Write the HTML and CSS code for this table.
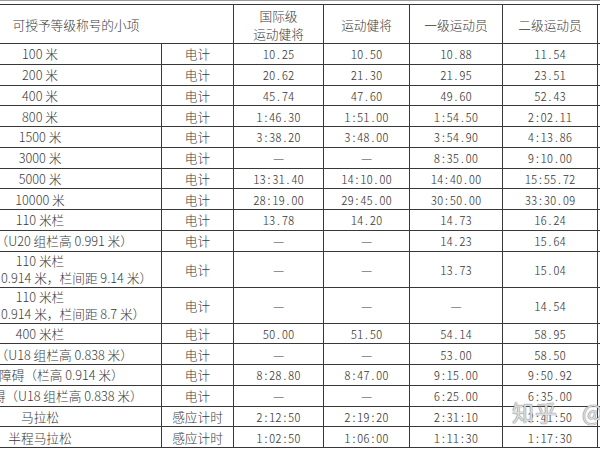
FILE: index.html
```html
<!DOCTYPE html>
<html lang="zh-CN">
<head>
<meta charset="utf-8">
<title>等级标准</title>
<link rel="stylesheet" href="styles.css">
</head>
<body>
<div class="topline"></div>
<table class="grade">
  <colgroup>
    <col class="c-item"><col class="c-time"><col class="c-a"><col class="c-b"><col class="c-c"><col class="c-d"><col class="c-e">
  </colgroup>
  <thead>
    <tr class="head">
      <th colspan="2" class="title">可授予等级称号的小项</th>
      <th class="two">国际级<br>运动健将</th>
      <th>运动健将</th>
      <th>一级运动员</th>
      <th>二级运动员</th>
      <th></th>
    </tr>
  </thead>
  <tbody>
    <tr class="s"><td>100 米</td><td>电计</td><td>10.25</td><td>10.50</td><td>10.88</td><td>11.54</td><td></td></tr>
    <tr class="s"><td>200 米</td><td>电计</td><td>20.62</td><td>21.30</td><td>21.95</td><td>23.51</td><td></td></tr>
    <tr class="s"><td>400 米</td><td>电计</td><td>45.74</td><td>47.60</td><td>49.60</td><td>52.43</td><td></td></tr>
    <tr class="s"><td>800 米</td><td>电计</td><td>1:46.30</td><td>1:51.00</td><td>1:54.50</td><td>2:02.11</td><td></td></tr>
    <tr class="s"><td>1500 米</td><td>电计</td><td>3:38.20</td><td>3:48.00</td><td>3:54.90</td><td>4:13.86</td><td></td></tr>
    <tr class="s"><td>3000 米</td><td>电计</td><td>—</td><td>—</td><td>8:35.00</td><td>9:10.00</td><td></td></tr>
    <tr class="s"><td>5000 米</td><td>电计</td><td>13:31.40</td><td>14:10.00</td><td>14:40.00</td><td>15:55.72</td><td></td></tr>
    <tr class="s"><td>10000 米</td><td>电计</td><td>28:19.00</td><td>29:45.00</td><td>30:50.00</td><td>33:30.09</td><td></td></tr>
    <tr class="s"><td>110 米栏</td><td>电计</td><td>13.78</td><td>14.20</td><td>14.73</td><td>16.24</td><td></td></tr>
    <tr class="s"><td>110 米栏（U20 组栏高 0.991 米）</td><td>电计</td><td>—</td><td>—</td><td>14.23</td><td>15.64</td><td></td></tr>
    <tr class="d"><td><span class="l1">110 米栏</span><span class="l2">0.914 米，栏间距 9.14 米）</span></td><td>电计</td><td>—</td><td>—</td><td>13.73</td><td>15.04</td><td></td></tr>
    <tr class="d"><td><span class="l1">110 米栏</span><span class="l2">0.914 米，栏间距 8.7 米）</span></td><td>电计</td><td>—</td><td>—</td><td>—</td><td>14.54</td><td></td></tr>
    <tr class="s"><td>400 米栏</td><td>电计</td><td>50.00</td><td>51.50</td><td>54.14</td><td>58.95</td><td></td></tr>
    <tr class="s"><td>400 米栏（U18 组栏高 0.838 米）</td><td>电计</td><td>—</td><td>—</td><td>53.00</td><td>58.50</td><td></td></tr>
    <tr class="s"><td>3000 米障碍（栏高 0.914 米）</td><td>电计</td><td>8:28.80</td><td>8:47.00</td><td>9:15.00</td><td>9:50.92</td><td></td></tr>
    <tr class="s"><td>3000 米障碍（U18 组栏高 0.838 米）</td><td>电计</td><td>—</td><td>—</td><td>6:25.00</td><td>6:35.00</td><td></td></tr>
    <tr class="s"><td>马拉松</td><td>感应计时</td><td>2:12:50</td><td>2:19:20</td><td>2:31:10</td><td>2:41:50</td><td></td></tr>
    <tr class="s"><td>半程马拉松</td><td>感应计时</td><td>1:02:50</td><td>1:06:00</td><td>1:11:30</td><td>1:17:30</td><td></td></tr>
  </tbody>
</table>
<div class="wm">知乎 @</div>
</body>
</html>
```
FILE: styles.css
```css
html, body {
  margin: 0;
  padding: 0;
}
body {
  width: 600px;
  height: 450px;
  overflow: hidden;
  position: relative;
  background: #fff;
  color: #3a3a3a;
  font-family: "Noto Sans CJK SC", sans-serif;
  font-size: 12.7px;
  font-weight: 300;
}
.topline {
  height: 1px;
  background: #9a9a9a;
}
.grade {
  border-collapse: collapse;
  table-layout: fixed;
  width: 769px;
  margin: 3px 0 0 -82px;
}
.c-item { width: 243px; }
.c-time { width: 72px; }
.c-a { width: 90px; }
.c-b { width: 86px; }
.c-c { width: 93px; }
.c-d { width: 95px; }
.c-e { width: 90px; }
.grade th,
.grade td {
  border: 1px solid #383838;
  padding: 0;
  text-align: center;
  vertical-align: middle;
  font-weight: 300;
  white-space: nowrap;
  line-height: 17px;
}
.grade td:nth-child(n+3) {
  font-feature-settings: "hwid" 1;
  word-spacing: -3px;
}
.head { height: 34px; }
.head .two { line-height: 18px; padding-top: 2px; }
.s { height: 20.75px; }
.d { height: 36px; }
.l1 { display: block; }
.l2 {
  display: block;
  text-align: left;
  padding-left: 82px;
}
.wm {
  position: absolute;
  left: 512px;
  top: 398px;
  font-size: 22px;
  line-height: 26px;
  font-weight: 400;
  white-space: nowrap;
  color: rgba(240, 240, 240, 0.85);
  text-shadow: 0 0 1px #777, 0 0 1px #777;
  word-spacing: 18px;
  letter-spacing: 1px;
}
```
